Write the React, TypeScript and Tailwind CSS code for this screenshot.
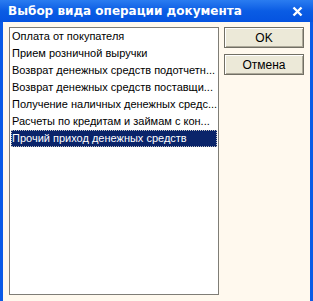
const items = [
  "Оплата от покупателя",
  "Прием розничной выручки",
  "Возврат денежных средств подотчетн...",
  "Возврат денежных средств поставщи...",
  "Получение наличных денежных средс...",
  "Расчеты по кредитам и займам с кон...",
  "Прочий приход денежных средств",
];

export default function App() {
  const selected = 6;
  return (
    <div className="w-[313px] h-[301px] flex flex-col bg-[#0a5ae6] font-['Liberation_Sans',sans-serif] overflow-hidden">
      <div className="h-[22px] shrink-0 flex items-center justify-between pl-[8px] pr-[10px] bg-gradient-to-b from-[#2a7cf0] via-[#0a5ce4] to-[#0553e0]">
        <span className="text-white font-bold text-[12px] font-['DejaVu_Sans',sans-serif]">
          Выбор вида операции документа
        </span>
        <svg width="11" height="11" viewBox="0 0 11 11">
          <path d="M1.5 1.5 L9.5 9.5 M9.5 1.5 L1.5 9.5" stroke="white" strokeWidth="2.4" />
        </svg>
      </div>
      <div className="flex-1 mx-[3px] bg-[#fff9ee] flex gap-[5px] pl-[6px] pt-[5px] pb-[6px] pr-[6px]">
        <ul className="w-[210px] bg-white border border-[#7f7d76] px-[1px] overflow-hidden">
          {items.map((t, i) => (
            <li
              key={t}
              className={
                i === selected
                  ? "h-[17px] flex items-center pl-[1px] text-[11px] whitespace-nowrap bg-[#0a246a] text-white outline-1 outline-dotted outline-[#c0c0c0] -outline-offset-1"
                  : "h-[17px] flex items-center pl-[1px] text-[11px] whitespace-nowrap text-black"
              }
            >
              {t}
            </li>
          ))}
        </ul>
        <div className="flex flex-col gap-[6px]">
          <button className="w-[80px] h-[21px] bg-[#ece9d8] border border-[#716f64] shadow-[inset_1px_1px_0_#fff,inset_-1px_-1px_0_#aca899] text-[12px] text-black">
            OK
          </button>
          <button className="w-[80px] h-[21px] bg-[#ece9d8] border border-[#716f64] shadow-[inset_1px_1px_0_#fff,inset_-1px_-1px_0_#aca899] text-[12px] text-black">
            Отмена
          </button>
        </div>
      </div>
    </div>
  );
}
